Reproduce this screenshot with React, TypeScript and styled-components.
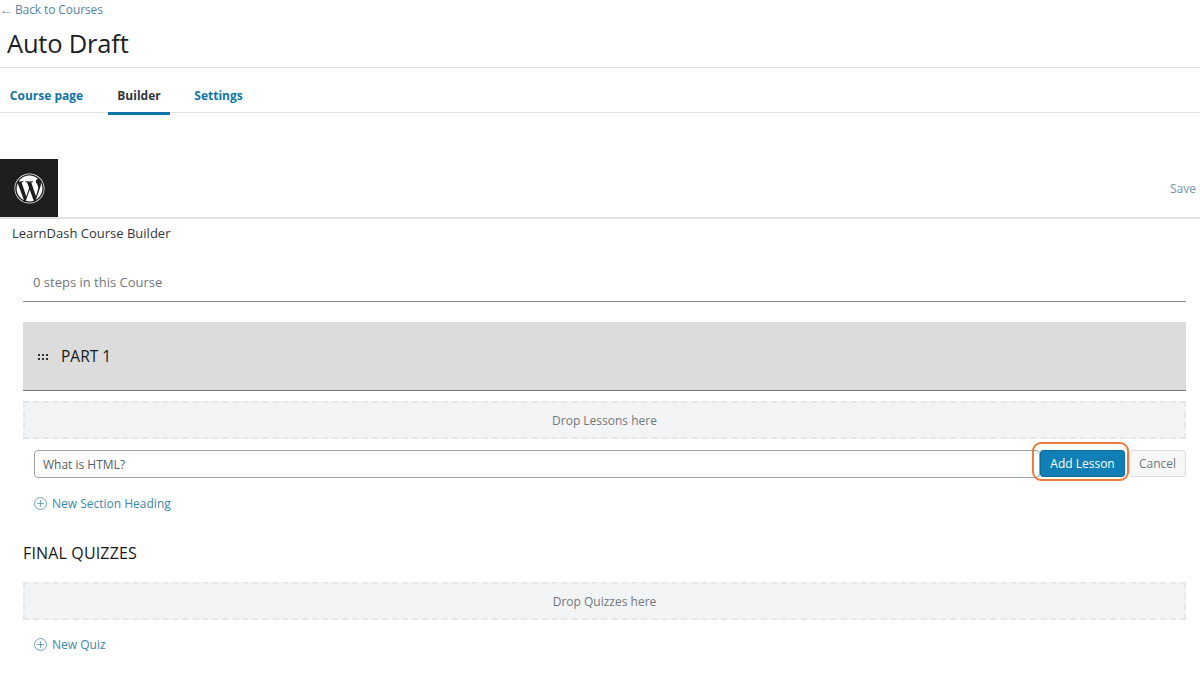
import React from "react";
import styled, { createGlobalStyle } from "styled-components";
import { FaWordpress } from "react-icons/fa";

const Global = createGlobalStyle`
  html, body { margin: 0; padding: 0; background: #fff; }
  body { font-family: "Open Sans", "Noto Sans", "Liberation Sans", sans-serif; width: 1200px; height: 680px; overflow: hidden; }
  * { box-sizing: border-box; }
`;

const Page = styled.div`
  display: flex;
  flex-direction: column;
  width: 1200px;
  height: 680px;
  overflow: hidden;
`;

const Header = styled.header`
  height: 68px;
  border-bottom: 1px solid #e4e4e4;
  display: flex;
  flex-direction: column;
`;

const BackLink = styled.a`
  height: 19px;
  line-height: 19px;
  font-size: 12px;
  letter-spacing: -0.1px;
  color: #5b82a6;
`;

const Title = styled.h1`
  margin: 0;
  padding-left: 7px;
  font-size: 25.5px;
  line-height: 48px;
  font-weight: 400;
  letter-spacing: -0.2px;
  color: #1b1f23;
`;

const Tabs = styled.nav`
  height: 45px;
  border-bottom: 1px solid #e4e4e4;
  display: flex;
  align-items: stretch;
  padding-left: 9px;
`;

const Tab = styled.a<{ $active?: boolean; $w: number; $ml?: number }>`
  width: ${(p) => p.$w}px;
  height: 47px;
  margin-left: ${(p) => p.$ml ?? 0}px;
  line-height: 56px;
  font-size: 12px;
  font-weight: 700;
  text-align: center;
  color: ${(p) => (p.$active ? "#32373c" : "#0f75a8")};
  border-bottom: 3px solid ${(p) => (p.$active ? "#0f75a8" : "transparent")};
`;

const Toolbar = styled.div`
  margin-top: 46px;
  height: 60px;
  border-bottom: 2px solid #e2e2e2;
  display: flex;
  justify-content: space-between;
  align-items: center;
`;

const Logo = styled.div`
  width: 58px;
  height: 58px;
  background: #1e1e1e;
  color: #fff;
  display: flex;
  align-items: center;
  justify-content: center;
`;

const SaveLink = styled.a`
  font-size: 12px;
  color: #6f94b5;
  margin-right: 4px;
`;

const BuilderLabel = styled.div`
  height: 29px;
  line-height: 29px;
  padding-left: 12px;
  font-size: 13px;
  color: #32373c;
`;

const Content = styled.main`
  padding: 0 14px 0 23px;
  display: flex;
  flex-direction: column;
`;

const Steps = styled.div`
  margin-top: 18px;
  height: 36px;
  line-height: 33px;
  padding-left: 10px;
  font-size: 13px;
  color: #72777c;
  border-bottom: 1px solid #8a8a8a;
`;

const SectionHeader = styled.div`
  margin-top: 20px;
  height: 69px;
  background: #dcdcdc;
  border-bottom: 1px solid #777;
  display: flex;
  align-items: center;
  padding-left: 15px;
  gap: 13px;
`;

const Grip = styled.span`
  display: inline-grid;
  grid-template-columns: repeat(3, 2px);
  gap: 2px;
  margin-top: 2px;
  i { width: 2px; height: 2px; background: #333; display: block; }
`;

const SectionName = styled.span`
  font-size: 15.5px;
  color: #16181a;
`;

const DropZone = styled.div<{ $mt: number }>`
  margin-top: ${(p) => p.$mt}px;
  height: 38px;
  background: #f2f4f5;
  border: 2px dashed #e6e7e8;
  display: flex;
  align-items: center;
  justify-content: center;
  font-size: 12px;
  color: #72777c;
`;

const FormRow = styled.div`
  margin-top: 11px;
  margin-left: 11px;
  display: flex;
  align-items: flex-start;
  position: relative;
`;

const LessonInput = styled.div`
  width: 1006px;
  height: 28px;
  border: 1px solid #9a9fa3;
  border-radius: 4px;
  padding-left: 8px;
  line-height: 27px;
  font-size: 12px;
  color: #555d66;
  background: #fff;
`;

const AddButton = styled.button`
  width: 85px;
  height: 27px;
  padding: 0;
  background: #0f7fb5;
  border: 1px solid #0a6b9a;
  border-radius: 3px;
  color: #fff;
  font: 400 12px "Open Sans", "Noto Sans", sans-serif;
`;

const CancelButton = styled.button`
  margin-left: 4px;
  width: 57px;
  height: 27px;
  padding: 0;
  background: #f6f7f7;
  border: 1px solid #dcdcde;
  border-radius: 3px;
  color: #72777c;
  font: 400 12px "Open Sans", "Noto Sans", sans-serif;
`;

const Highlight = styled.div`
  position: absolute;
  left: 998px;
  top: -8px;
  width: 97px;
  height: 39px;
  border: 2px solid #ee7a3c;
  border-radius: 9px;
  pointer-events: none;
`;

const AddLink = styled.a<{ $mt: number }>`
  margin-top: ${(p) => p.$mt}px;
  margin-left: 11px;
  display: flex;
  align-items: center;
  gap: 5px;
  height: 20px;
  font-size: 12px;
  color: #3a87ad;
`;

const PlusIcon = () => (
  <svg width="13" height="13" viewBox="0 0 13 13" fill="none" stroke="#4a90b0" strokeWidth="0.8">
    <circle cx="6.5" cy="6.5" r="6" />
    <path d="M6.5 3.2v6.6M3.2 6.5h6.6" />
  </svg>
);

const QuizHeading = styled.h2`
  margin: 30px 0 0;
  font-size: 16px;
  line-height: 20px;
  font-weight: 400;
  letter-spacing: 0.15px;
  color: #16181a;
`;

export default function App() {
  return (
    <Page>
      <Global />
      <Header>
        <BackLink>← Back to Courses</BackLink>
        <Title>Auto Draft</Title>
      </Header>
      <Tabs>
        <Tab $w={75}>Course page</Tab>
        <Tab $w={62} $ml={24} $active>Builder</Tab>
        <Tab $w={49} $ml={24}>Settings</Tab>
      </Tabs>
      <Toolbar>
        <Logo><FaWordpress size={31} /></Logo>
        <SaveLink>Save</SaveLink>
      </Toolbar>
      <BuilderLabel>LearnDash Course Builder</BuilderLabel>
      <Content>
        <Steps>0 steps in this Course</Steps>
        <SectionHeader>
          <Grip>{Array.from({ length: 6 }, (_, i) => <i key={i} />)}</Grip>
          <SectionName>PART 1</SectionName>
        </SectionHeader>
        <DropZone $mt={10}>Drop Lessons here</DropZone>
        <FormRow>
          <LessonInput>What is HTML?</LessonInput>
          <AddButton>Add Lesson</AddButton>
          <CancelButton>Cancel</CancelButton>
          <Highlight />
        </FormRow>
        <AddLink $mt={15}><PlusIcon />New Section Heading</AddLink>
        <QuizHeading>FINAL QUIZZES</QuizHeading>
        <DropZone $mt={19}>Drop Quizzes here</DropZone>
        <AddLink $mt={14}><PlusIcon />New Quiz</AddLink>
      </Content>
    </Page>
  );
}
